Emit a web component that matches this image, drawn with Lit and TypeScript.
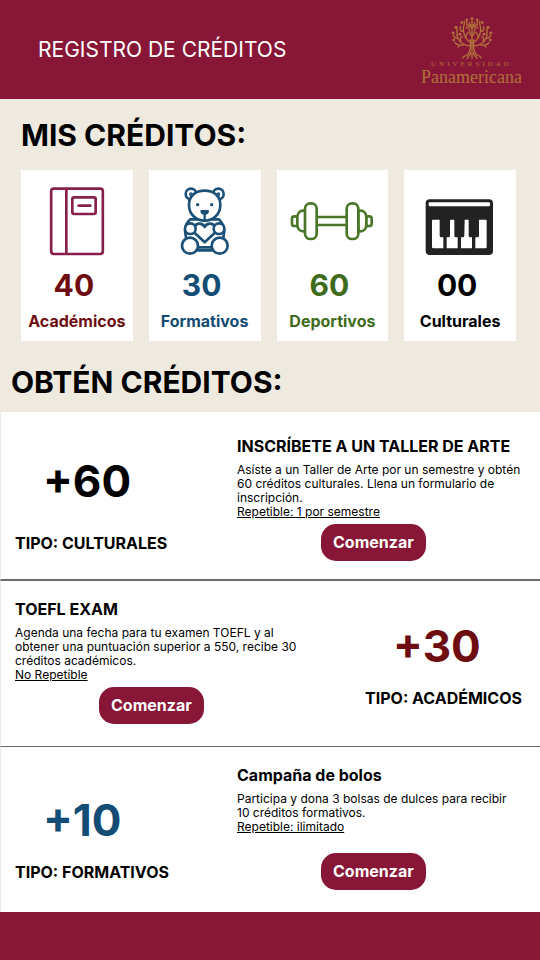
import { LitElement, html, svg, css } from "lit";
import { customElement, property } from "lit/decorators.js";
import { classMap } from "lit/directives/class-map.js";

type Kind = "academicos" | "formativos" | "deportivos" | "culturales";

interface Credit {
  kind: Kind;
  total: string;
  label: string;
}

interface Offer {
  kind: Kind;
  points: string;
  type: string;
  title: string;
  text: string;
  note: string;
}

const CREDITS: Credit[] = [
  { kind: "academicos", total: "40", label: "Académicos" },
  { kind: "formativos", total: "30", label: "Formativos" },
  { kind: "deportivos", total: "60", label: "Deportivos" },
  { kind: "culturales", total: "00", label: "Culturales" },
];

const OFFERS: Offer[] = [
  {
    kind: "culturales",
    points: "+60",
    type: "TIPO: CULTURALES",
    title: "INSCRÍBETE A UN TALLER DE ARTE",
    text: "Asíste a un Taller de Arte por un semestre y obtén 60 créditos culturales. Llena un formulario de inscripción.",
    note: "Repetible: 1 por semestre",
  },
  {
    kind: "academicos",
    points: "+30",
    type: "TIPO: ACADÉMICOS",
    title: "TOEFL EXAM",
    text: "Agenda una fecha para tu examen TOEFL y al obtener una puntuación superior a 550, recibe 30 créditos académicos.",
    note: "No Repetible",
  },
  {
    kind: "formativos",
    points: "+10",
    type: "TIPO: FORMATIVOS",
    title: "Campaña de bolos",
    text: "Participa y dona 3 bolsas de dulces para recibir 10 créditos formativos.",
    note: "Repetible: ilimitado",
  },
];

const VIEW_BOX: Record<Kind, string> = {
  academicos: "73 81 252 204",
  formativos: "61 81 252 204",
  deportivos: "58 81 252 204",
  culturales: "61 81 252 204",
};

const DRAWING = {
  // Notebook with spine and label
  academicos: svg`
    <g fill="none" stroke="#86204a" stroke-width="8" stroke-linecap="round" stroke-linejoin="round">
      <rect x="121.500" y="86" width="155" height="196" rx="8" />
      <path d="M167 87V281" />
      <rect x="185" y="112" width="70" height="50" rx="5" />
      <path d="M204 137H239" />
    </g>`,
  // Teddy bear holding a heart
  formativos: svg`
    <g fill="#fff" stroke="#1b5078" stroke-width="8" stroke-linecap="round" stroke-linejoin="round">
      <path d="M143 178C132 188 127 200 127 212L134 262H238L245 212C244 198 238 187 229 178Z" />
      <path d="M165 271H207" />
      <circle cx="145" cy="102" r="16" />
      <circle cx="227" cy="102" r="16" />
      <circle cx="145" cy="103" r="2" fill="#1b5078" />
      <circle cx="227" cy="103" r="2" fill="#1b5078" />
      <path d="M139 134C139 107 160 92 186 92S233 107 233 134C233 163 212 182 186 182S139 163 139 134Z" />
      <path d="M186 247L157 220C148 209 154 193 168 191C176 190 183 195 186 201C189 195 196 190 204 191C218 193 224 209 215 220Z" />
      <circle cx="143" cy="206" r="16" />
      <circle cx="229" cy="206" r="16" />
      <circle cx="142" cy="257" r="24" />
      <circle cx="231" cy="257" r="24" />
      <path d="M186 161V181" stroke-width="7" />
      <path d="M176 153H196C196 158 191 161 186 161S176 158 176 153Z" fill="#1b5078" stroke-width="6" />
      <circle cx="165" cy="134" r="5" fill="#1b5078" stroke="none" />
      <circle cx="207" cy="134" r="5" fill="#1b5078" stroke="none" />
    </g>`,
  // Dumbbell
  deportivos: svg`
    <g fill="#fff" stroke="#4a7628" stroke-width="8" stroke-linejoin="round">
      <rect x="64" y="169" width="17" height="29" rx="7" />
      <rect x="286" y="169" width="17" height="29" rx="7" />
      <path d="M104 152H98C87 152 80 161 80 172V194C80 205 87 214 98 214H104Z" />
      <path d="M263 152H269C280 152 287 161 287 172V194C287 205 280 214 269 214H263Z" />
      <path d="M138 171H228M138 195H228" />
      <rect x="103" y="130" width="35" height="107" rx="16" />
      <rect x="228" y="130" width="35" height="107" rx="16" />
    </g>`,
  // Piano keyboard
  culturales: svg`
    <rect x="84" y="118" width="202" height="167" rx="12" fill="#222" />
    <g fill="#fff">
      <rect x="93" y="127" width="184" height="12" rx="3" />
      <path d="M106 179H126V227Q126 232 131 232H137V265H107Q103 265 103 261V182Q103 179 106 179Z" />
      <path d="M160 179H170V227Q170 232 175 232H180V265H147V232H152Q157 232 157 227V182Q157 179 160 179Z" />
      <path d="M201 179H213V227Q213 232 218 232H223V265H190V232H195Q200 232 200 227Z" />
      <path d="M244 179H264Q267 179 267 182V261Q267 265 263 265H233V232H239Q244 232 244 227Z" />
    </g>`,
};

@customElement("university-logo")
export class UniversityLogo extends LitElement {
  static styles = css`
    :host {
      display: flex;
      flex-direction: column;
      align-items: center;
      padding-top: 4px;
      color: #b0703a;
      font-family: "Liberation Serif", serif;
    }
    .tree {
      width: 42px;
      height: 42px;
    }
    .over {
      margin-top: 1px;
      font-size: 7px;
      line-height: 8px;
      letter-spacing: 3px;
    }
    .name {
      font-size: 18px;
      line-height: 18px;
    }
  `;

  render() {
    return html`
      <svg class="tree" viewBox="122 36 122 122" aria-hidden="true">
        <g fill="none" stroke="currentColor" stroke-width="4" stroke-linecap="round">
          <path d="M178 102C180 122 178 136 172 143C166 150 158 149 156 155M188 102C186 122 188 136 194 143C200 150 208 149 210 155" />
          <path d="M183 104V138M179 140C177 148 171 150 169 157M187 140C189 148 195 150 197 157M183 142V156" />
          <path d="M183 104V42M183 94C174 82 172 68 176 52M183 94C192 82 194 68 190 52" />
          <path d="M181 112C168 104 160 92 158 76S164 56 160 48M185 112C198 104 206 92 208 76S202 56 206 48" />
          <path d="M180 120C164 120 148 112 142 98S142 74 138 64M186 120C202 120 218 112 224 98S224 74 228 64" />
          <path d="M160 116C150 120 140 118 134 110M206 116C216 120 226 118 232 110" />
          <path d="M142 98C134 98 129 93 129 86M224 98C232 98 237 93 237 86M158 78C150 78 146 72 150 64M208 78C216 78 220 72 216 64" />
          <path d="M166 98C164 88 168 84 172 82M200 98C202 88 198 84 194 82M174 64C168 62 166 56 168 48M192 64C198 62 200 56 198 48" />
          <path d="M151 108C148 100 150 94 155 92M215 108C218 100 216 94 211 92M183 70C179 66 178 62 179 58M183 70C187 66 188 62 187 58" />
        </g>
        <g fill="currentColor">
          <circle cx="183" cy="41" r="4" />
          <circle cx="168" cy="44" r="4" />
          <circle cx="198" cy="44" r="4" />
          <circle cx="153" cy="52" r="4" />
          <circle cx="213" cy="52" r="4" />
          <circle cx="136" cy="66" r="4" />
          <circle cx="230" cy="66" r="4" />
          <circle cx="128" cy="82" r="4" />
          <circle cx="238" cy="82" r="4" />
          <circle cx="130" cy="103" r="4" />
          <circle cx="236" cy="103" r="4" />
          <circle cx="148" cy="86" r="4" />
          <circle cx="218" cy="86" r="4" />
          <circle cx="144" cy="122" r="3" />
          <circle cx="222" cy="122" r="3" />
          <circle cx="167" cy="68" r="3" />
          <circle cx="199" cy="68" r="3" />
        </g>
      </svg>
      <span class="over">UNIVERSIDAD</span>
      <span class="name">Panamericana</span>
    `;
  }
}

@customElement("credit-card")
export class CreditCard extends LitElement {
  @property({ attribute: false }) credit!: Credit;

  static styles = css`
    :host {
      display: flex;
      flex-direction: column;
      align-items: center;
      padding: 17px 0 10px;
      background: #fff;
      font-weight: 700;
    }
    .icon {
      width: 84px;
      height: 68px;
      overflow: visible;
    }
    .total {
      margin-top: 12px;
      padding-right: 6px;
      font-size: 30px;
      line-height: 36px;
    }
    .label {
      margin-top: 8px;
      font-size: 16px;
      line-height: 20px;
    }
    .academicos {
      color: #6e0d10;
    }
    .formativos {
      color: #134c74;
    }
    .deportivos {
      color: #3f6b1c;
    }
    .culturales {
      color: #000;
    }
  `;

  render() {
    const { kind, total, label } = this.credit;
    return html`
      <svg class="icon" viewBox=${VIEW_BOX[kind]} aria-hidden="true">${DRAWING[kind]}</svg>
      <span class="total ${kind}">${total}</span>
      <span class="label ${kind}">${label}</span>
    `;
  }
}

@customElement("app-root")
export class AppRoot extends LitElement {
  static styles = css`
    :host {
      display: flex;
      flex-direction: column;
      min-height: 100vh;
      background: #efeadf;
      color: #000;
      font-family: Inter, "Liberation Sans", sans-serif;
    }
    h1,
    h2,
    h3,
    p {
      margin: 0;
    }
    .top {
      display: flex;
      align-items: center;
      justify-content: space-between;
      padding: 13px 18px 13px 38px;
      background: #881737;
    }
    .top h1 {
      color: #fff;
      font-size: 21px;
      line-height: 28px;
      font-weight: 400;
    }
    .heading {
      font-size: 30px;
      line-height: 36px;
      font-weight: 700;
    }
    .mine {
      padding: 18px 24px 23px 21px;
    }
    .cards {
      display: grid;
      grid-template-columns: repeat(4, 1fr);
      gap: 16px;
      margin-top: 17px;
    }
    .earn .heading {
      padding: 0 11px 12px;
    }
    .offer {
      display: flex;
      justify-content: space-between;
      padding: 18px 15px 22px 14px;
      background: #fff;
      border-left: 1px solid #efeadf;
      border-bottom: 1px solid #6b6b6b;
    }
    .offer.lead {
      padding-top: 24px;
      padding-bottom: 18px;
      border-bottom-width: 2px;
    }
    .offer.last {
      border-bottom: 0;
    }
    .offer.reverse {
      flex-direction: row-reverse;
      padding-right: 18px;
    }
    .score {
      display: flex;
      flex-direction: column;
      justify-content: flex-end;
      gap: 16px;
      padding-bottom: 8px;
    }
    .lead .score {
      gap: 26px;
    }
    .reverse .score {
      padding-bottom: 16px;
    }
    .points {
      padding-left: 28px;
      font-size: 44px;
      line-height: 52px;
      font-weight: 700;
    }
    .type,
    .title {
      font-size: 16px;
      line-height: 20px;
      font-weight: 700;
      white-space: nowrap;
    }
    .academicos {
      color: #6e0d10;
    }
    .formativos {
      color: #134c74;
    }
    .culturales {
      color: #000;
    }
    .details {
      display: flex;
      flex-direction: column;
      align-items: flex-start;
      flex: 0 0 288px;
      min-height: 125px;
    }
    .text {
      margin-top: 7px;
      padding-right: 4px;
      font-size: 12px;
      line-height: 14px;
    }
    .note {
      font-size: 12px;
      line-height: 14px;
      text-decoration: underline;
    }
    .start {
      margin: auto 0 0 84px;
      padding: 8px 12px 9px;
      border: 0;
      border-radius: 15px;
      background: #881737;
      color: #fff;
      font: 700 16px/20px Inter, "Liberation Sans", sans-serif;
      cursor: pointer;
    }
    .foot {
      flex: 1;
      min-height: 48px;
      background: #881737;
    }
  `;

  private offer(offer: Offer, index: number) {
    const classes = {
      offer: true,
      lead: index === 0,
      reverse: index % 2 === 1,
      last: index === OFFERS.length - 1,
    };
    return html`
      <article class=${classMap(classes)}>
        <div class="score">
          <span class="points ${offer.kind}">${offer.points}</span>
          <span class="type">${offer.type}</span>
        </div>
        <div class="details">
          <h3 class="title">${offer.title}</h3>
          <p class="text">${offer.text}</p>
          <p class="note">${offer.note}</p>
          <button class="start" type="button">Comenzar</button>
        </div>
      </article>
    `;
  }

  render() {
    return html`
      <header class="top">
        <h1>REGISTRO DE CRÉDITOS</h1>
        <university-logo></university-logo>
      </header>
      <section class="mine">
        <h2 class="heading">MIS CRÉDITOS:</h2>
        <div class="cards">
          ${CREDITS.map((credit) => html`<credit-card .credit=${credit}></credit-card>`)}
        </div>
      </section>
      <section class="earn">
        <h2 class="heading">OBTÉN CRÉDITOS:</h2>
        ${OFFERS.map((offer, index) => this.offer(offer, index))}
      </section>
      <footer class="foot"></footer>
    `;
  }
}
